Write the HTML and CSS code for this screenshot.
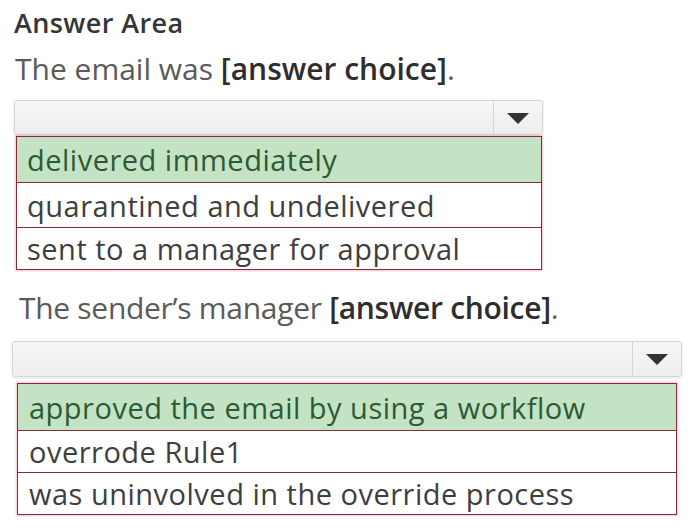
FILE: index.html
```html
<!DOCTYPE html>
<html>
<head>
<meta charset="utf-8">
<link rel="stylesheet" href="styles.css">
</head>
<body>
<div class="page">
  <h1 class="title">Answer Area</h1>
  <p class="prompt prompt-1">The email was <strong>[answer choice]</strong>.</p>
  <div class="dropdown dropdown-1">
    <div class="dd-field"></div>
    <div class="dd-btn"><span class="arrow"></span></div>
  </div>
  <ul class="options options-1">
    <li class="opt correct r1">delivered immediately</li>
    <li class="opt r2">quarantined and undelivered</li>
    <li class="opt r3">sent to a manager for approval</li>
  </ul>
  <p class="prompt prompt-2">The sender’s manager <strong>[answer choice]</strong>.</p>
  <div class="dropdown dropdown-2">
    <div class="dd-field"></div>
    <div class="dd-btn"><span class="arrow"></span></div>
  </div>
  <ul class="options options-2">
    <li class="opt correct s1">approved the email by using a workflow</li>
    <li class="opt s2">overrode Rule1</li>
    <li class="opt s3">was uninvolved in the override process</li>
  </ul>
</div>
</body>
</html>
```
FILE: styles.css
```css
*, *::before, *::after {
  box-sizing: border-box;
}
html, body {
  margin: 0;
  padding: 0;
  background: #ffffff;
}
body {
  font-family: "Open Sans", "Noto Sans", "Liberation Sans", sans-serif;
  width: 700px;
  height: 532px;
  overflow: hidden;
}
.page {
  padding: 8px 0 0 14px;
}
.title {
  margin: 0;
  font-size: 27px;
  line-height: 30px;
  font-weight: 600;
  color: #363636;
  letter-spacing: 0.4px;
}
.prompt {
  margin: 0;
  font-size: 30px;
  line-height: 36px;
  color: #5a5a5a;
  letter-spacing: 0;
}
.prompt strong {
  font-weight: 600;
  color: #2e2e2e;
}
.prompt-1 {
  margin-top: 13px;
  margin-left: 1px;
}
.prompt-2 {
  margin-top: 20px;
  margin-left: 5px;
  letter-spacing: -0.3px;
}
.dropdown {
  display: flex;
  border: 1px solid #d6d6d6;
  border-radius: 3px;
  background: linear-gradient(#f6f6f6, #eeeeee);
  box-shadow: 0 1px 3px rgba(0, 0, 0, 0.12);
}
.dropdown-1 {
  margin-top: 13px;
  width: 529px;
  height: 35px;
}
.dropdown-2 {
  margin-top: 15px;
  margin-left: -2px;
  width: 670px;
  height: 36px;
}
.dd-field {
  flex: 1;
}
.dd-btn {
  width: 49px;
  border-left: 1px solid #d4d4d4;
  display: flex;
  align-items: center;
  justify-content: center;
}
.arrow {
  width: 0;
  height: 0;
  border-left: 11px solid transparent;
  border-right: 11px solid transparent;
  border-top: 11px solid #333333;
  margin-top: 1px;
}
.options {
  list-style: none;
  margin: 0;
  padding: 0;
  border: 1.5px solid #852a36;
  box-shadow: 0 0 2px 1px rgba(240, 120, 140, 0.45);
}
.options-1 {
  margin-top: 1px;
  margin-left: 2px;
  width: 526px;
}
.options-2 {
  margin-top: 6px;
  margin-left: 3px;
  width: 660px;
}
.opt {
  padding-left: 10px;
  display: flex;
  align-items: center;
  font-size: 29px;
  color: #3e3e3e;
  letter-spacing: 0.5px;
  border-bottom: 1.5px solid #852a36;
}
.opt:last-child {
  border-bottom: none;
}
.opt.correct {
  background: #c4e3c4;
  color: #2c5a34;
}
.r1 { height: 46px; }
.r2 { height: 45px; }
.r3 { height: 41px; }
.s1 { height: 47px; }
.s2 { height: 42px; }
.s3 { height: 41px; }
.options-2 .opt {
  padding-left: 11px;
}
```
